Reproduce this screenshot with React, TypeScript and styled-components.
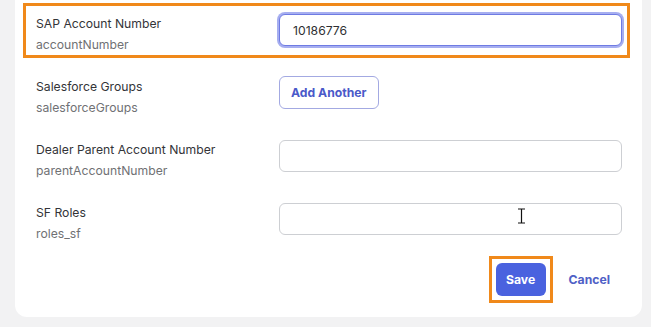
import styled, { createGlobalStyle, css } from "styled-components"

const GlobalStyle = createGlobalStyle`
  html, body {
    margin: 0;
    padding: 0;
    background: #f2f2f3;
  }
  body {
    font-family: Inter, "Noto Sans", "Liberation Sans", sans-serif;
    -webkit-font-smoothing: antialiased;
  }
  * {
    box-sizing: border-box;
  }
`

const Page = styled.div`
  width: 651px;
  height: 327px;
  padding: 0 9px 0 15px;
  overflow: hidden;
`

const Card = styled.div`
  background: #ffffff;
  border-radius: 0 0 12px 12px;
  padding: 6px 15px 14px 11px;
`

const Form = styled.form`
  display: flex;
  flex-direction: column;
  gap: 14px;
`

const Row = styled.div<{ highlighted?: boolean }>`
  display: grid;
  grid-template-columns: 243px 343px;
  align-items: start;
  padding: 8px 5px 0 10px;
  ${(p) =>
    p.highlighted &&
    css`
      outline: 3px solid #f0891a;
    `}
`

const LabelBlock = styled.div`
  display: flex;
  flex-direction: column;
  margin-top: -1px;
`

const Label = styled.label`
  font-size: 12.2px;
  line-height: 21px;
  color: #333438;
`

const FieldName = styled.span`
  font-size: 12.2px;
  line-height: 21px;
  color: #707174;
`

const Input = styled.input<{ focused?: boolean }>`
  width: 343px;
  height: 32px;
  border: 1px solid #cdcfd3;
  border-radius: 6px;
  padding: 0 13px;
  font-family: inherit;
  font-size: 12.2px;
  color: #2e2f33;
  background: #fff;
  outline: none;
  ${(p) =>
    p.focused &&
    css`
      border-color: #6f7be3;
      box-shadow: 0 0 0 2px #a6aef0;
    `}
`

const OutlineButton = styled.button`
  height: 33px;
  padding: 0 11px;
  border: 1px solid #a3a9e2;
  border-radius: 6px;
  background: #fff;
  color: #4a59c9;
  font-family: inherit;
  font-size: 12.2px;
  font-weight: 700;
  justify-self: start;
  margin-top: -1px;
`

const InputWrap = styled.div`
  position: relative;
`

const TextCursor = styled.svg`
  position: absolute;
  left: 238px;
  top: 5px;
`

const Actions = styled.div`
  display: flex;
  justify-content: flex-end;
  align-items: center;
  gap: 4px;
  margin-top: -2px;
  padding-right: 5px;
`

const Highlight = styled.span`
  display: inline-flex;
  border: 3px solid #f0891a;
  padding: 4px;
`

const PrimaryButton = styled.button`
  width: 50px;
  height: 33px;
  border: none;
  border-radius: 6px;
  background: #4a62df;
  color: #fff;
  font-family: inherit;
  font-size: 12.2px;
  font-weight: 700;
`

const LinkButton = styled.button`
  height: 33px;
  padding: 0 12px;
  border: none;
  background: transparent;
  color: #4f60c6;
  font-family: inherit;
  font-size: 12.2px;
  font-weight: 700;
`

export default function App() {
  return (
    <Page>
      <GlobalStyle />
      <Card>
        <Form onSubmit={(e) => e.preventDefault()}>
          <Row highlighted>
            <LabelBlock>
              <Label>SAP Account Number</Label>
              <FieldName>accountNumber</FieldName>
            </LabelBlock>
            <Input focused defaultValue="10186776" />
          </Row>
          <Row>
            <LabelBlock>
              <Label>Salesforce Groups</Label>
              <FieldName>salesforceGroups</FieldName>
            </LabelBlock>
            <OutlineButton type="button">Add Another</OutlineButton>
          </Row>
          <Row>
            <LabelBlock>
              <Label>Dealer Parent Account Number</Label>
              <FieldName>parentAccountNumber</FieldName>
            </LabelBlock>
            <Input />
          </Row>
          <Row>
            <LabelBlock>
              <Label>SF Roles</Label>
              <FieldName>roles_sf</FieldName>
            </LabelBlock>
            <InputWrap>
              <Input />
              <TextCursor width="9" height="16" viewBox="0 0 9 16">
                <path
                  d="M1 1h7M1 15h7M4.5 1v14"
                  stroke="#111"
                  strokeWidth="1.2"
                  fill="none"
                />
              </TextCursor>
            </InputWrap>
          </Row>
          <Actions>
            <Highlight>
              <PrimaryButton type="submit">Save</PrimaryButton>
            </Highlight>
            <LinkButton type="button">Cancel</LinkButton>
          </Actions>
        </Form>
      </Card>
    </Page>
  )
}
